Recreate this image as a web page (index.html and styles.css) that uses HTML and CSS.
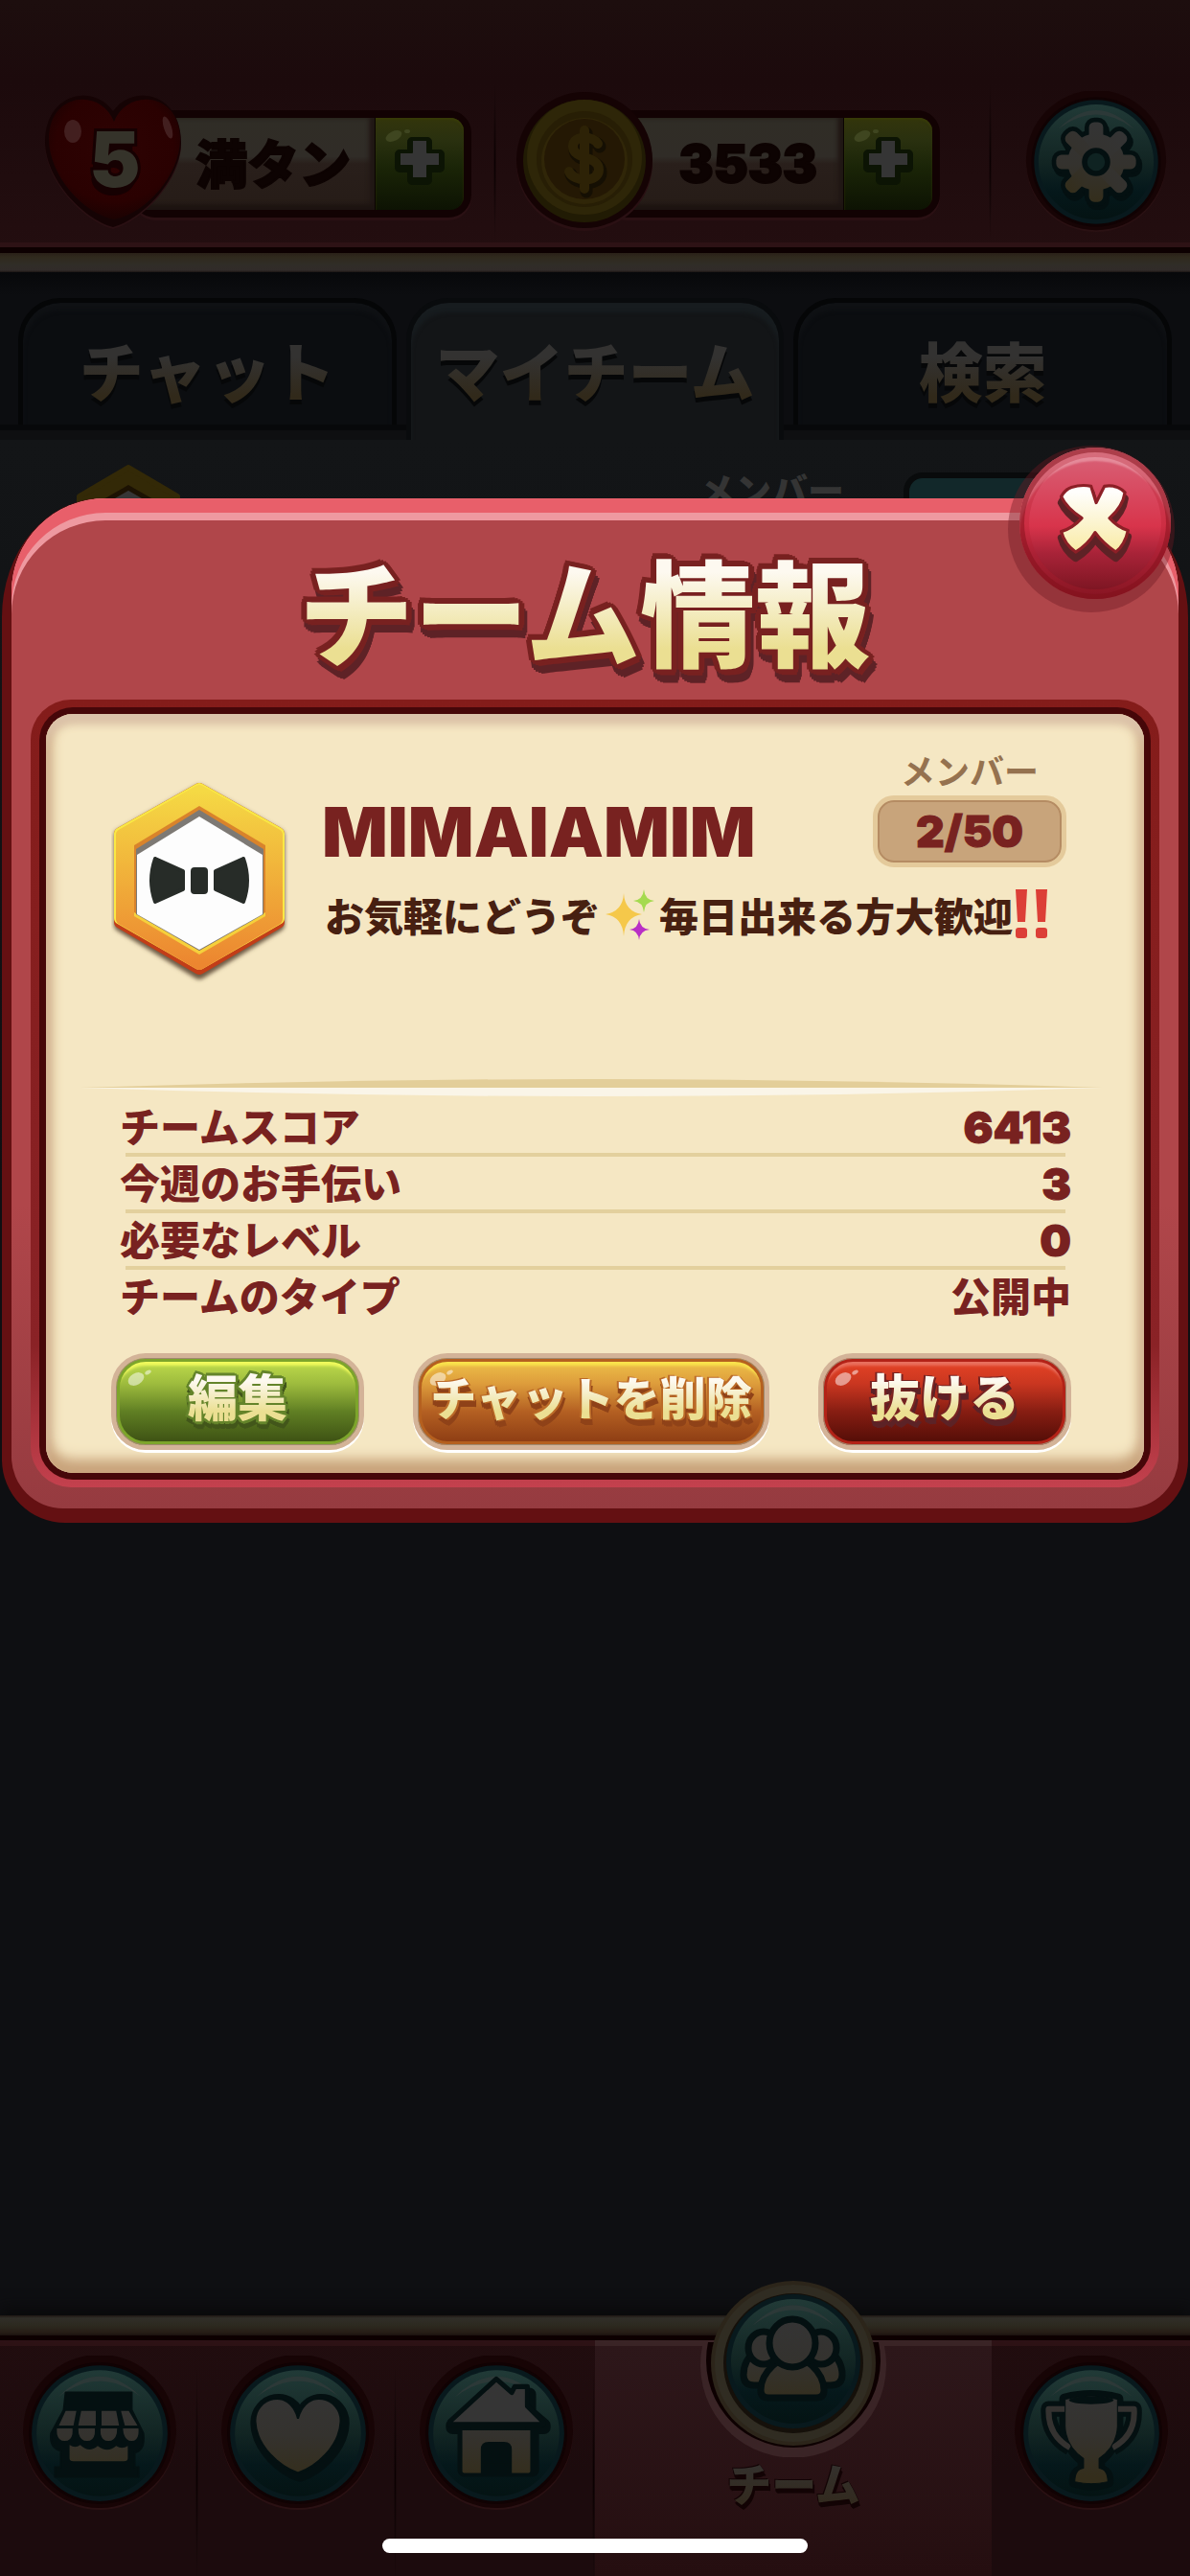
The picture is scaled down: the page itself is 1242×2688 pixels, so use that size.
FILE: index.html
```html
<!DOCTYPE html>
<html lang="ja">
<head>
    <meta charset="UTF-8">
    <meta name="viewport" content="width=device-width, initial-scale=1.0">
    <title>チーム情報</title>
    <link rel="stylesheet" href="styles.css">
</head>
<body>
    <!-- shared gradients and shapes -->
    <svg class="defs" width="0" height="0" aria-hidden="true">
        <defs>
            <linearGradient id="teal" x1="0" y1="0" x2="0" y2="1">
                <stop offset="0" stop-color="#213a37"/>
                <stop offset="0.5" stop-color="#122523"/>
                <stop offset="0.75" stop-color="#05181b"/>
                <stop offset="1" stop-color="#041313"/>
            </linearGradient>
            <linearGradient id="ivory" gradientUnits="userSpaceOnUse" x1="0" y1="40" x2="0" y2="125">
                <stop offset="0" stop-color="#343434"/>
                <stop offset="0.5" stop-color="#34322e"/>
                <stop offset="1" stop-color="#342e1c"/>
            </linearGradient>
            <g id="orb">
                <circle cx="80" cy="80" r="79" fill="#2a1113"/>
                <circle cx="80" cy="78" r="79" fill="#170405"/>
                <circle cx="80" cy="80" r="73" fill="#100203"/>
                <circle cx="80" cy="80" r="70" fill="#08191d"/>
                <circle cx="80" cy="80" r="65" fill="url(#teal)"/>
                <path d="M37 43 Q80 0 123 43 Q80 10 37 43Z" fill="#2c3938"/>
            </g>
            <g id="plus">
                <path d="M-8 -21h16v13h13v14h-13v13h-16v-13h-13v-14h13z"/>
            </g>
            <g id="cog">
                <circle cx="80" cy="80" r="32"/>
                <g id="teeth">
                    <rect x="72" y="35" width="16" height="90" rx="6"/>
                    <rect x="35" y="72" width="90" height="16" rx="6"/>
                </g>
                <use href="#teeth" transform="rotate(45 80 80)"/>
            </g>
        </defs>
    </svg>

    <div class="app">
        <header class="topbar">
            <div class="topbar-cell">
                <div class="resource">
                    <div class="resource-icon">
                        <svg width="144" height="142" viewBox="0 0 144 142">
                            <defs>
                                <radialGradient id="red-heart" cx="0.5" cy="0.4" r="0.6">
                                    <stop offset="0" stop-color="#2e0303"/>
                                    <stop offset="0.75" stop-color="#2a0101"/>
                                    <stop offset="1" stop-color="#1b0202"/>
                                </radialGradient>
                            </defs>
                            <path d="M72 18 C94 -12 143 0 143 50 C143 88 104 130 72 139 C40 130 1 88 1 50 C1 0 50 -12 72 18Z" fill="#2a1013" transform="translate(0 2)"/>
                            <path d="M72 18 C94 -12 143 0 143 50 C143 88 104 130 72 139 C40 130 1 88 1 50 C1 0 50 -12 72 18Z" fill="#150304"/>
                            <path d="M73 29 C86 -6 142 -3 142 47 C142 85 106 125 73 131 C41 125 5 85 5 47 C5 -3 60 -6 73 29Z" fill="url(#red-heart)"/>
                            <ellipse cx="30" cy="39" rx="9" ry="12" fill="#4b2a2a" opacity="0.75"/>
                            <ellipse cx="129" cy="35" rx="4" ry="12" transform="rotate(-18 129 35)" fill="#4b2a2a" opacity="0.75"/>
                        </svg>
                        <span class="lives">5</span>
                    </div>
                    <div class="resource-bar">
                        <span class="resource-value">満タン</span>
                        <button class="add" type="button" aria-label="ライフを追加">
                            <svg width="92" height="96" viewBox="0 0 92 96">
                                <ellipse cx="19" cy="19" rx="9" ry="5" transform="rotate(-25 19 19)" fill="#3f4620"/>
                                <ellipse cx="33" cy="14" rx="3" ry="2" fill="#3f4620"/>
                                <use href="#plus" x="46" y="46" fill="#0c1404" stroke="#0c1404" stroke-width="10" stroke-linejoin="round"/>
                                <use href="#plus" x="46" y="44" fill="#353535" stroke="#0c1404" stroke-width="2" stroke-linejoin="round"/>
                            </svg>
                        </button>
                    </div>
                </div>
            </div>
            <div class="topbar-cell">
                <div class="resource">
                    <div class="resource-icon">
                        <svg width="144" height="146" viewBox="0 0 144 146">
                            <circle cx="72" cy="74" r="71" fill="#2a1013"/>
                            <circle cx="72" cy="71" r="71" fill="#150304"/>
                            <circle cx="72" cy="72" r="64" fill="#211b04"/>
                            <circle cx="72" cy="68" r="60" fill="#2e2608"/>
                            <circle cx="72" cy="70" r="50" fill="#271e05"/>
                            <circle cx="72" cy="72" r="45" fill="#302608"/>
                            <circle cx="72" cy="70" r="42" fill="#241804"/>
                            <path d="M86 54 C82 46 60 44 60 57 C60 71 87 66 87 81 C87 95 60 94 56 83 M72 40 V101" fill="none" stroke="#150f03" stroke-width="13" stroke-linecap="round" transform="translate(2 3)"/>
                            <path d="M86 54 C82 46 60 44 60 57 C60 71 87 66 87 81 C87 95 60 94 56 83 M72 40 V101" fill="none" stroke="#2d2206" stroke-width="10" stroke-linecap="round"/>
                        </svg>
                    </div>
                    <div class="resource-bar">
                        <span class="resource-value coins">3533</span>
                        <button class="add" type="button" aria-label="コインを追加">
                            <svg width="92" height="96" viewBox="0 0 92 96">
                                <ellipse cx="19" cy="19" rx="9" ry="5" transform="rotate(-25 19 19)" fill="#3f4620"/>
                                <ellipse cx="33" cy="14" rx="3" ry="2" fill="#3f4620"/>
                                <use href="#plus" x="46" y="46" fill="#0c1404" stroke="#0c1404" stroke-width="10" stroke-linejoin="round"/>
                                <use href="#plus" x="46" y="44" fill="#353535" stroke="#0c1404" stroke-width="2" stroke-linejoin="round"/>
                            </svg>
                        </button>
                    </div>
                </div>
            </div>
            <div class="topbar-cell settings-cell">
                <button class="icon-btn" type="button" aria-label="設定">
                    <svg width="148" height="148" viewBox="0 0 160 160">
                        <use href="#orb"/>
                        <use href="#cog" x="2" y="4" fill="#041011" stroke="#041011" stroke-width="10"/>
                        <use href="#cog" fill="#041011" stroke="#041011" stroke-width="10"/>
                        <use href="#cog" fill="url(#ivory)"/>
                        <circle cx="80" cy="80" r="13" fill="#0f2322" stroke="#041011" stroke-width="6"/>
                    </svg>
                </button>
            </div>
        </header>

        <nav class="tabs">
            <button class="tab" type="button"><span class="tab-label">チャット</span></button>
            <button class="tab active" type="button"><span class="tab-label">マイチーム</span></button>
            <button class="tab" type="button"><span class="tab-label">検索</span></button>
        </nav>

        <main class="team-panel">
            <svg width="110" height="120" viewBox="0 0 110 120">
                <path d="M55 3 L106 33 V92 L55 118 L4 92 V33Z" fill="#332907" stroke="#332907" stroke-width="6" stroke-linejoin="round"/>
                <path d="M55 24 L90 44 V90 L55 106 L20 90 V44Z" fill="#363636" stroke="#1c1203" stroke-width="5"/>
            </svg>
            <div class="team-panel-members">
                <span>メンバー</span>
                <div class="team-panel-btn"></div>
            </div>
        </main>

        <footer class="bottombar">
            <button class="nav-btn" type="button" aria-label="ショップ">
                <svg width="162" height="162" viewBox="0 0 160 160">
                    <use href="#orb"/>
                    <path d="M45 38h68v18l12 24q2 18-9 20v15h4v10h-86v-10h6v-17q-12-3-10-18l13-24z" fill="#041011" stroke="#041011" stroke-width="2" stroke-linejoin="round"/>
                    <path d="M45 57h11l-3 15h-15zM61 57h15v15h-18zM82 57h15l3 15h-18zM102 57h8l9 15h-13z" fill="url(#ivory)"/>
                    <path d="M36 75h16q1 13-8 13t-8-13zM58 75h17q1 13-8 13t-9-13zM81 75h17q0 13-9 13t-8-13zM104 75h16q1 13-7 13t-9-13z" fill="url(#ivory)"/>
                    <path d="M49 92q6 4 11 0q9 9 18 1q10 8 19 0q6 4 12 0v13q0 3-4 3h-52q-4 0-4-3z" fill="url(#ivory)"/>
                </svg>
            </button>
            <button class="nav-btn" type="button" aria-label="ライフ">
                <svg width="162" height="162" viewBox="0 0 160 160">
                    <use href="#orb"/>
                    <path d="M80 65 C88 32 125 43 124 68 C123 94 98 115 80 121 C62 115 37 94 36 68 C35 43 72 32 80 65Z" fill="#041011" stroke="#041011" stroke-width="14" stroke-linejoin="round" transform="translate(2 2)"/>
                    <path d="M80 65 C88 32 125 43 124 68 C123 94 98 115 80 121 C62 115 37 94 36 68 C35 43 72 32 80 65Z" fill="url(#ivory)" stroke="#041011" stroke-width="2"/>
                </svg>
            </button>
            <button class="nav-btn" type="button" aria-label="ホーム">
                <svg width="162" height="162" viewBox="0 0 160 160">
                    <use href="#orb"/>
                    <path d="M80 33 L96 44 V37 H112 V56 L127 69 V71 H115 V115 H45 V71 H33 V69Z" transform="translate(2 3)" fill="#041011" stroke="#041011" stroke-width="14" stroke-linejoin="round"/>
                    <path d="M80 24 L96 38 L99 32 H112 V52 L128 68 V71 H32 V68Z" fill="#353535" stroke="#041011" stroke-width="5" stroke-linejoin="round"/>
                    <path d="M45 77h70v42q0 2-3 2h-16v-24q0-8-8-8h-16q-8 0-8 8v24h-16q-3 0-3-2z" fill="url(#ivory)"/>
                </svg>
            </button>
            <button class="nav-btn nav-current" type="button">
                <svg class="nav-team" width="196" height="196" viewBox="-98 -98 196 196">
                    <path d="M-95 -18 A97 97 0 1 0 95 -18Z" fill="#3a2426"/>
                    <path d="M-89 -22 A91 91 0 1 0 89 -22Z" fill="#0d0001"/>
                    <circle r="86" fill="#2c251a"/>
                    <circle r="82" fill="#302c22"/>
                    <circle r="73" fill="#15100a"/>
                    <g transform="translate(-80 -82)">
                        <circle cx="80" cy="80" r="70" fill="#08191d"/>
                        <circle cx="80" cy="80" r="65" fill="url(#teal)"/>
                        <path d="M37 43 Q80 0 123 43 Q80 10 37 43Z" fill="#2c3938"/>
                        <g fill="url(#ivory)" stroke="#041011" stroke-width="7" stroke-linejoin="round">
                            <path d="M42 68 Q28 78 28 94 Q28 105 39 105 H119 Q131 105 131 94 Q131 78 116 68Z"/>
                            <ellipse cx="49" cy="66" rx="16" ry="17"/>
                            <ellipse cx="109" cy="66" rx="16" ry="17"/>
                            <path d="M59 84 Q79 68 99 84 Q112 96 112 110 Q112 118 104 118 H54 Q46 118 46 110 Q46 96 59 84Z"/>
                            <ellipse cx="79" cy="61" rx="24" ry="25"/>
                        </g>
                    </g>
                </svg>
                <span class="nav-label">チーム</span>
            </button>
            <button class="nav-btn" type="button" aria-label="ランキング">
                <svg width="162" height="162" viewBox="0 0 160 160">
                    <use href="#orb"/>
                    <g stroke-linejoin="round" fill="none">
                        <path d="M53 55 H36 Q35 82 58 95 M106 55 H124 Q126 82 102 95" stroke="#041011" stroke-width="16"/>
                        <path d="M53 45 Q80 38 107 45 V73 Q106 94 88 108 V118 Q97 119 97 130 Q80 136 63 130 Q63 119 72 118 V108 Q54 94 53 73Z" stroke="#041011" stroke-width="12"/>
                        <path d="M53 55 H36 Q35 82 58 95 M106 55 H124 Q126 82 102 95" stroke="#343230" stroke-width="6"/>
                        <path d="M53 45 Q80 38 107 45 V73 Q106 94 88 106 V116 Q97 117 97 130 Q80 134 63 130 Q63 117 72 116 V106 Q54 94 53 73Z" fill="url(#ivory)" stroke="#041011"/>
                        <ellipse cx="80" cy="46" rx="23" ry="4" fill="#041011"/>
                    </g>
                </svg>
            </button>
        </footer>
    </div>

    <section class="modal" role="dialog" aria-labelledby="modal-title">
        <button class="close" type="button" aria-label="閉じる">
            <svg width="84" height="88" viewBox="0 0 78 82">
                <defs>
                    <linearGradient id="cream" x1="0" y1="0" x2="0" y2="1">
                        <stop offset="0.1" stop-color="#fffefc"/>
                        <stop offset="1" stop-color="#f9eba5"/>
                    </linearGradient>
                    <path id="cross" d="M16 4 Q26 1 35 3 L40 19 L48 3 Q60 1 68 9 Q66 23 53 34 Q61 43 71 46 Q68 60 59 67 Q46 58 39 48 Q32 60 20 67 Q9 59 6 47 Q17 44 26 34 Q11 24 6 13 Q10 6 16 4Z"/>
                </defs>
                <use href="#cross" y="8" fill="#5e2226" stroke="#5e2226" stroke-width="7" stroke-linejoin="round"/>
                <use href="#cross" y="2" fill="url(#cream)" stroke="#8c1f26" stroke-width="3" stroke-linejoin="round"/>
            </svg>
        </button>
        <div class="modal-body">
            <h1 class="modal-title" id="modal-title"><span class="title-text">チーム情報</span></h1>
            <div class="frame">
                <div class="card">
                    <div class="team">
                        <svg class="emblem" width="185" height="216" viewBox="0 0 185 216">
                            <defs>
                                <linearGradient id="gold" x1="0" y1="0" x2="0" y2="1">
                                    <stop offset="0" stop-color="#f5d944"/>
                                    <stop offset="1" stop-color="#ec8630"/>
                                </linearGradient>
                                <filter id="soft"><feGaussianBlur stdDeviation="2"/></filter>
                            </defs>
                            <path d="M92 14 L174 60 V153 L92 203 L10 153 V60Z" fill="#6d5a44" stroke="#6d5a44" stroke-width="14" stroke-linejoin="round" filter="url(#soft)"/>
                            <path d="M92 12 L174 58 V150 L92 198 L10 150 V58Z" fill="#c23d18" stroke="#c23d18" stroke-width="14" stroke-linejoin="round"/>
                            <path d="M92 12 L174 58 V146 L92 193 L10 146 V58Z" fill="#f9e845" stroke="#f9e845" stroke-width="14" stroke-linejoin="round"/>
                            <path d="M92 13 L173 59 V147 L92 194 L11 147 V59Z" fill="url(#gold)" stroke="url(#gold)" stroke-width="12" stroke-linejoin="round"/>
                            <path d="M92 29 L161 70 V144 L92 184 L24 144 V70Z" fill="#f5d03c"/>
                            <path d="M92 29 L161 70 V140 L92 180 L24 140 V70Z" fill="#d9832b"/>
                            <path d="M92 33 L159 74 V142 L92 180 L26 142 V74Z" fill="#7d7974"/>
                            <path d="M92 40 L158 80 V142 L92 179 L27 142 V80Z" fill="#fdfdfd"/>
                            <g fill="#272c28" stroke="#272c28" stroke-width="4" stroke-linejoin="round">
                                <path d="M46 84 L75 97 V116 L46 129 Q38 107 46 84Z"/>
                                <path d="M138 84 L109 97 V116 L138 129 Q146 107 138 84Z"/>
                                <rect x="85" y="95" width="14" height="24" rx="2"/>
                            </g>
                        </svg>
                        <div class="team-info">
                            <div class="team-top">
                                <h2 class="team-name">MIMAIAMIM</h2>
                                <div class="members">
                                    <span class="members-label">メンバー</span>
                                    <span class="members-count">2/50</span>
                                </div>
                            </div>
                            <p class="team-desc">お気軽にどうぞ<svg class="sparkle" width="54" height="54" viewBox="0 0 54 54">
                                    <path d="M21 5 Q22 24 40 27 Q22 30 21 50 Q20 30 2 27 Q20 24 21 5Z" fill="#f5c84a"/>
                                    <path d="M42 1 Q43 12 53 13 Q43 14 42 25 Q41 14 31 13 Q41 12 42 1Z" fill="#a4da4f"/>
                                    <path d="M37 32 Q38 42 48 43 Q38 44 37 54 Q36 44 27 43 Q36 42 37 32Z" fill="#b92fc6"/>
                                </svg>毎日出来る方大歓迎<svg class="bang" width="38" height="54" viewBox="0 0 38 54">
                                    <g fill="#dc3f37">
                                        <path d="M3 1h12l-2 34h-8zM24 1h12l-2 34h-8z"/>
                                        <rect x="3" y="41" width="12" height="11" rx="3"/>
                                        <rect x="24" y="41" width="12" height="11" rx="3"/>
                                    </g>
                                </svg></p>
                        </div>
                    </div>

                    <svg class="divider" height="18" viewBox="0 0 1000 18" preserveAspectRatio="none">
                        <path d="M0 9 Q500 -9 1000 9Z" fill="#e3ce99"/>
                        <path d="M0 9 Q500 27 1000 9Z" fill="#faf5e8"/>
                    </svg>

                    <dl class="stats">
                        <div class="stat"><dt>チームスコア</dt><dd class="num">6413</dd></div>
                        <div class="stat"><dt>今週のお手伝い</dt><dd class="num">3</dd></div>
                        <div class="stat"><dt>必要なレベル</dt><dd class="num">0</dd></div>
                        <div class="stat"><dt>チームのタイプ</dt><dd>公開中</dd></div>
                    </dl>

                    <div class="actions">
                        <button class="btn btn-green" type="button"><span class="btn-text">編集</span></button>
                        <button class="btn btn-orange" type="button"><span class="btn-text">チャットを削除</span></button>
                        <button class="btn btn-red" type="button"><span class="btn-text">抜ける</span></button>
                    </div>
                </div>
            </div>
        </div>
    </section>
    <div class="home-indicator"></div>
</body>
</html>
```

FILE: styles.css
```css
* {
    box-sizing: border-box;
}
body {
    margin: 0;
    position: relative;
    min-height: 100vh;
    background: #0e0f12;
    font-family: "Noto Sans CJK JP", "Noto Sans", sans-serif;
    font-weight: 900;
}
button {
    border: none;
    background: none;
    padding: 0;
    margin: 0;
    font: inherit;
    cursor: pointer;
}
svg {
    display: block;
}
h1, h2, p, dl, dd {
    margin: 0;
}
h1, h2 {
    font-weight: 900;
}
.defs {
    position: absolute;
}
.app {
    display: flex;
    flex-direction: column;
    min-height: 100vh;
}

/* Top bar */
.topbar {
    display: grid;
    grid-template-columns: 5fr 5fr 2fr;
    height: 284px;
    padding: 86px 0 32px;
    background:
        linear-gradient(#2a2018, #30291d 20%, #302d27 60%, #312b29 90%, #1c1614) bottom / 100% 20px no-repeat,
        linear-gradient(#0d0001, #0d0001) 0 258px / 100% 6px no-repeat,
        linear-gradient(#2d1215, #2d1215) 0 253px / 100% 5px no-repeat,
        linear-gradient(#1d0e0e, #1c0a0c 30%, #240e10);
}
.topbar-cell {
    display: flex;
    align-items: center;
    padding: 0 26px 0 46px;
    background:
        radial-gradient(closest-side, #0a0001, transparent) right / 3px 100% no-repeat;
}
.topbar-cell + .topbar-cell {
    padding: 0 54px 0 20px;
}
.topbar-cell.settings-cell {
    justify-content: center;
    padding: 0 0 0 10px;
    background: none;
}
.resource {
    display: flex;
    align-items: center;
    flex: 1;
}
.resource-icon {
    position: relative;
    z-index: 1;
}
.lives {
    position: absolute;
    inset: 0;
    padding-left: 4px;
    text-align: center;
    font-family: Inter, "Noto Sans", sans-serif;
    font-size: 80px;
    line-height: 136px;
    color: #35332a;
    -webkit-text-stroke: 6px #160102;
    paint-order: stroke fill;
    text-shadow: -2px 8px 0 #160102;
}
.resource-bar {
    display: flex;
    flex: 1;
    margin: 4px 0 0 -52px;
    border: 8px solid #120203;
    border-radius: 24px;
    background: #120203;
    box-shadow: 0 3px 0 #2a1013;
}
.resource-value {
    flex: 1;
    padding-left: 34px;
    text-align: center;
    font-size: 54px;
    line-height: 92px;
    color: #0d0302;
    -webkit-text-stroke: 2px #0d0302;
    background: linear-gradient(#302d26, #302c27 42%, #291f1b 50%, #261c17);
    box-shadow: inset 0 -6px 4px #1d1411, inset -6px 0 4px #221916;
}
.coins {
    padding-left: 44px;
    font-family: Inter, "Noto Sans", sans-serif;
    line-height: 96px;
}
.add {
    width: 93px;
    border-left: 1px solid #0a0401;
    border-radius: 0 14px 14px 0;
    background: linear-gradient(#33350c, #29300f 25%, #1a2407 55%, #0d1303);
    box-shadow: inset 0 2px 2px #383c08;
}

/* Tabs */
.tabs {
    display: flex;
    gap: 10px;
    height: 175px;
    padding: 27px 19px 0;
    background:
        linear-gradient(#07080a 6px, #0e0f11 6px) bottom / 100% 16px no-repeat,
        linear-gradient(#07080a, #0c0d10 24px);
}
.tab {
    flex: 1;
    height: 132px;
    padding-top: 10px;
    border: 5px solid #050607;
    border-bottom: none;
    border-radius: 44px 44px 0 0;
    background: #0b0d10;
    box-shadow: inset 0 8px 4px #0f1114;
}
.tab.active {
    height: 148px;
    padding-bottom: 16px;
    border-color: #090b0d;
    background: #131517;
    box-shadow: inset 0 10px 4px #171c1f;
}
.tab-label {
    display: block;
    font-size: 67px;
    line-height: 117px;
    background: linear-gradient(#333231 40%, #31291a 75%);
    -webkit-background-clip: text;
    background-clip: text;
    color: transparent;
    filter: drop-shadow(0 5px 0 #060708);
}
.team-panel {
    display: flex;
    justify-content: space-between;
    align-items: flex-start;
    height: 800px;
    padding: 26px 79px;
    background: linear-gradient(#131517, #0e0f12);
}
.team-panel-members {
    display: flex;
    gap: 62px;
    font-size: 38px;
    line-height: 50px;
    color: #343434;
}
.team-panel-btn {
    width: 220px;
    height: 70px;
    margin-top: 8px;
    border: 6px solid #090b0c;
    border-radius: 20px;
    background: #12282a;
}

/* Bottom bar */
.bottombar {
    display: grid;
    grid-template-columns: 1fr 1fr 1fr 2fr 1fr;
    height: 272px;
    margin-top: auto;
    padding-top: 32px;
    background:
        linear-gradient(#1e1713, #302e28 3px, #2c291f 11px, #271d16 18px, #1b120f 21px, #0d0001 21px, #0d0001 26px, #2d1215 26px) 0 0 / 100% 32px no-repeat,
        linear-gradient(#220d0f, #1c0b0d 60%);
    box-shadow: 0 -8px 14px #0a0a0b;
}
.nav-btn {
    display: flex;
    flex-direction: column;
    align-items: center;
    padding-top: 10px;
    background:
        radial-gradient(closest-side, #0a0001, transparent) right 20px / 3px 230px no-repeat;
}
.nav-btn:last-child {
    background: none;
}
.nav-current {
    margin-top: -6px;
    padding-top: 0;
    background: linear-gradient(#3a2426 6px, #2d171a 6px, #250e10);
}
.nav-team {
    margin-top: -74px;
}
.nav-label {
    font-size: 47px;
    line-height: 52px;
    background: linear-gradient(#343230, #32291d);
    -webkit-background-clip: text;
    background-clip: text;
    color: transparent;
    filter: drop-shadow(1px 1px 0 #120304) drop-shadow(-1px -1px 0 #120304) drop-shadow(1px 4px 0 #120304);
}
.home-indicator {
    position: absolute;
    left: 50%;
    bottom: 24px;
    width: 444px;
    height: 15px;
    border-radius: 8px;
    background: #fff;
    transform: translateX(-50%);
}

/* Modal */
.modal {
    position: absolute;
    top: 520px;
    left: 2px;
    right: 2px;
    padding: 0 10px 15px;
    border-radius: 104px 104px 66px 66px / 124px 124px 66px 66px;
    background: #641012;
}
.modal-body {
    padding: 0 20px 22px;
    border-radius: 98px 98px 54px 54px;
    background: linear-gradient(#b0464a, #b0464a 70%, #963b40);
    box-shadow: inset 0 15px 0 #e85f6a, inset 0 23px 0 #ee99a0;
}
.modal-title {
    height: 210px;
    padding: 20px 22px 0 0;
    text-align: center;
    font-size: 120px;
    line-height: 190px;
}

/* gradient lettering, the outline grows out of stacked shadows */
.title-text,
.btn-text {
    display: inline-block;
    background: linear-gradient(#fdf9f0 30%, #ebdf92 72%);
    -webkit-background-clip: text;
    background-clip: text;
    color: transparent;
}
.title-text {
    filter:
        drop-shadow(3px 1px 0 #782120) drop-shadow(-3px -1px 0 #782120)
        drop-shadow(-1px 3px 0 #782120) drop-shadow(1px -3px 0 #782120)
        drop-shadow(2px 2px 0 #782120) drop-shadow(-2px -2px 0 #782120)
        drop-shadow(3px 8px 0 #5e2226);
}
.close {
    position: absolute;
    top: -53px;
    right: 18px;
    z-index: 2;
    display: flex;
    align-items: center;
    justify-content: center;
    width: 158px;
    height: 158px;
    border-radius: 50%;
    background: linear-gradient(#d8657a, #d8344b 52%, #a82338 70%, #73121d);
    box-shadow: inset 0 0 0 5px rgba(130, 15, 25, 0.5), inset 0 0 0 10px rgba(180, 30, 45, 0.3), inset 0 14px 2px rgba(255, 225, 230, 0.35), -4px 6px 0 8px rgba(110, 25, 35, 0.4);
}
.frame {
    padding: 15px 16px;
    border-radius: 42px;
    background: linear-gradient(#841c1a, #8a2226 82%, #c4414e);
}
.card {
    padding: 36px 76px 24px 68px;
    border-radius: 28px;
    background: #f5e7c3;
    box-shadow: 0 0 0 7px #460709, inset 0 10px 8px #dcc3aa, inset 0 -14px 14px #c9a47c, inset 0 0 14px 4px #cba984;
}

/* Team header */
.team {
    display: flex;
    gap: 35px;
    height: 345px;
}
.emblem {
    margin-top: 31px;
}
.team-info {
    flex: 1;
}
.team-top {
    display: flex;
    align-items: flex-end;
    justify-content: space-between;
    padding-right: 5px;
}
.team-name {
    font-family: Inter, "Noto Sans", sans-serif;
    font-size: 72px;
    line-height: 74px;
    color: #782220;
}
.members {
    display: flex;
    flex-direction: column;
    width: 202px;
    text-align: center;
}
.members-label {
    margin-bottom: 5px;
    font-size: 36px;
    line-height: 44px;
    font-weight: 700;
    color: #95724f;
}
.members-count {
    border: 5px solid #e4ca9b;
    border-radius: 22px;
    background: #c8a47b;
    box-shadow: inset 0 0 0 2px #b58c63;
    font-family: Inter, "Noto Sans", sans-serif;
    font-size: 46px;
    line-height: 65px;
    color: #782220;
    -webkit-text-stroke: 1px #782220;
}
.team-desc {
    display: flex;
    align-items: center;
    margin-top: 21px;
    padding-left: 3px;
    font-size: 41px;
    line-height: 56px;
    white-space: nowrap;
    color: #472011;
}
.sparkle {
    margin: 0 4px;
}
.divider {
    width: calc(100% + 64px);
    margin: 0 -32px;
}

/* Stats */
.stats {
    margin-top: 4px;
    padding-left: 9px;
    font-size: 42px;
    line-height: 52px;
    color: #782220;
}
.stat {
    display: flex;
    justify-content: space-between;
    height: 59px;
    background: linear-gradient(#e3d09d, #e3d09d) bottom / calc(100% - 12px) 4px no-repeat;
}
.stat:last-child {
    height: 55px;
    background: none;
}
.num {
    font-family: Inter, "Noto Sans", sans-serif;
    font-size: 46px;
    line-height: 56px;
    -webkit-text-stroke: 1px #782220;
}

/* Buttons */
.actions {
    display: flex;
    justify-content: space-between;
    margin-top: 32px;
}
.btn {
    position: relative;
    width: 264px;
    height: 101px;
    padding-bottom: 14px;
    border: 5px solid #d3b398;
    border-radius: 36px;
    font-size: 52px;
    line-height: 76px;
}
.btn-green {
    background: linear-gradient(#c3e04e, #9dbb3d 30%, #5f7e23 62%, #3a4d12);
    box-shadow: 0 3px 0 #fff, inset 0 0 0 1px #a08a70, inset 0 0 0 4px #7da52b, inset 0 8px 3px #f0fa5c;
}
.btn-orange {
    width: 372px;
    font-size: 48px;
    background: linear-gradient(#f0c54b, #dd9c3b 30%, #b35f22 62%, #8a3a12);
    box-shadow: 0 3px 0 #fff, inset 0 0 0 1px #a08a70, inset 0 0 0 4px #b5601f, inset 0 8px 3px #f9e24c;
}
.btn-red {
    background: linear-gradient(#e94526, #c93620 30%, #861d12 62%, #4f0c06);
    box-shadow: 0 3px 0 #fff, inset 0 0 0 1px #a08a70, inset 0 0 0 4px #b32217, inset 0 8px 3px #e9705e;
}
.btn-green .btn-text {
    filter:
        drop-shadow(2px 1px 0 #64842a) drop-shadow(-2px -1px 0 #64842a)
        drop-shadow(-1px 2px 0 #64842a) drop-shadow(1px -2px 0 #64842a)
        drop-shadow(1px 5px 0 #42561a);
}
.btn-orange .btn-text {
    filter:
        drop-shadow(2px 1px 0 #bb6a27) drop-shadow(-2px -1px 0 #bb6a27)
        drop-shadow(1px 6px 0 #8f4218);
}
.btn-red .btn-text {
    filter:
        drop-shadow(2px 1px 0 #782220) drop-shadow(-2px -1px 0 #782220)
        drop-shadow(1px 6px 0 #5c2226);
}
/* glossy spot in the corner */
.btn::before,
.btn::after {
    content: "";
    position: absolute;
    top: 16px;
    left: 12px;
    width: 18px;
    height: 12px;
    border-radius: 50%;
    background: rgba(255, 255, 255, 0.5);
    transform: rotate(-30deg);
}
.btn::after {
    top: 13px;
    left: 30px;
    width: 7px;
    height: 4px;
}
```
